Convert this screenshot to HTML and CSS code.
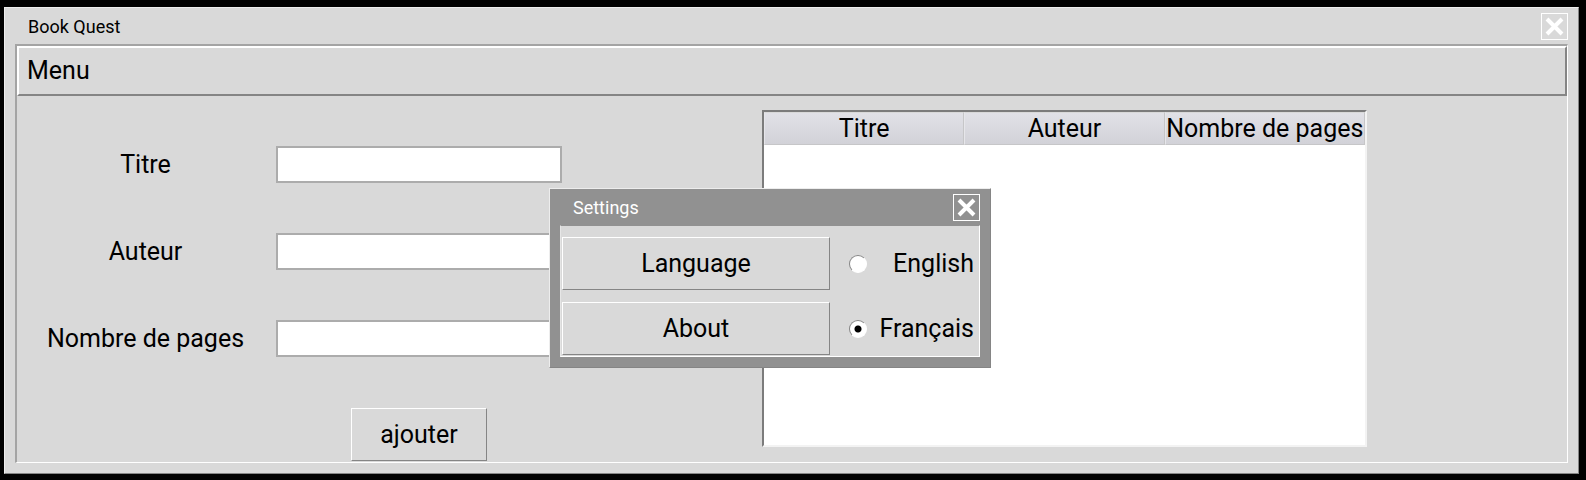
FILE: index.html
```html
<!DOCTYPE html>
<html lang="fr">
<head>
<meta charset="utf-8">
<title>Book Quest</title>
<link rel="stylesheet" href="styles.css">
</head>
<body class="desktop">
<main class="window">
  <header class="titlebar">
    <h1 class="title">Book Quest</h1>
    <button class="close" type="button" aria-label="Close">
      <svg class="cross" viewBox="0 0 25 25" aria-hidden="true"><path d="M5 5 L20 20 M20 5 L5 20"/></svg>
    </button>
  </header>
  <div class="frame">
    <nav class="menubar"><button class="menu-item" type="button">Menu</button></nav>
    <div class="content">
      <form class="form">
        <label class="label" for="titre">Titre</label>
        <input class="field" id="titre" type="text">
        <label class="label" for="auteur">Auteur</label>
        <input class="field" id="auteur" type="text">
        <label class="label" for="pages">Nombre de pages</label>
        <input class="field" id="pages" type="text">
        <button class="button add" type="button">ajouter</button>
      </form>
      <div class="list">
        <table class="table">
          <thead>
            <tr><th>Titre</th><th>Auteur</th><th>Nombre de pages</th></tr>
          </thead>
        </table>
      </div>
    </div>
  </div>
</main>
<section class="window settings" role="dialog" aria-labelledby="settings-title">
  <header class="titlebar">
    <h2 class="title" id="settings-title">Settings</h2>
    <button class="close" type="button" aria-label="Close">
      <svg class="cross" viewBox="0 0 25 25" aria-hidden="true"><path d="M5 5 L20 20 M20 5 L5 20"/></svg>
    </button>
  </header>
  <div class="panel">
    <button class="button" type="button">Language</button>
    <div class="option"><input class="radio" type="radio" name="lang" id="en"><label for="en">English</label></div>
    <button class="button" type="button">About</button>
    <div class="option"><input class="radio" type="radio" name="lang" id="fr" checked><label for="fr">Français</label></div>
  </div>
</section>
</body>
</html>
```

FILE: styles.css
```css
* {
  box-sizing: border-box;
}

.desktop {
  margin: 0;
  padding: 7px 7px 6px 4px;
  background: #000;
  color: #000;
  font: 25px/30px Roboto, sans-serif;
}

button,
input {
  font: inherit;
  color: inherit;
  border-radius: 0;
  margin: 0;
}

.window {
  padding: 0 10px 10px;
  background: #d9d9d9;
  border: 1px solid;
  border-color: #ededed #858585 #858585 #ededed;
}

.titlebar {
  display: flex;
  align-items: center;
  justify-content: space-between;
  height: 36px;
  padding-left: 13px;
}

.title {
  margin: 0;
  padding-top: 2px;
  font-size: 18px;
  line-height: 24px;
  font-weight: 400;
}

.close {
  width: 27px;
  height: 27px;
  padding: 0;
  border: 1px solid #fff;
  background: none;
}

.cross {
  display: block;
  fill: none;
  stroke: #fff;
  stroke-width: 4;
}

.frame {
  border: 1px solid;
  border-width: 2px 1px 1px 2px;
  border-color: #a4a4a4 #fff #fff #a4a4a4;
}

.menubar {
  padding: 8px;
  border: 2px solid;
  border-color: #fff #858585 #858585 #fff;
}

.menu-item {
  display: block;
  padding: 0;
  border: 0;
  background: none;
}

.content {
  display: grid;
  grid-template-columns: 545fr 200fr 605fr 200fr;
}

.form {
  display: grid;
  grid-template-columns: 259fr 286fr;
  grid-template-rows: repeat(3, 87px) auto;
  align-items: center;
  justify-items: center;
  padding: 25px 0 1px;
}

.label {
  padding-right: 2px;
}

.field {
  width: 100%;
  height: 37px;
  padding: 0 4px;
  border: 2px solid #acacac;
  background: #fff;
}

.button {
  height: 53px;
  padding: 0;
  border: 1px solid;
  border-color: #fff #858585 #858585 #fff;
  background: #d9d9d9;
}

.add {
  grid-column: 2;
  width: 136px;
  margin-top: 26px;
}

.list {
  grid-column: 3;
  margin: 14px 0 15px;
  border: 2px solid;
  border-color: #7c7c7c #f3f3f3 #f3f3f3 #7c7c7c;
  background: #fff;
}

.table {
  width: 100%;
  border-collapse: separate;
  border-spacing: 0;
  table-layout: fixed;
}

.table th {
  padding: 1px 0 0;
  font-weight: 400;
  white-space: nowrap;
  border: 1px solid;
  border-color: #d9d9d9 #c6c6c8 #c6c6c8 #e6e6ea;
  background: linear-gradient(#e1e1e7, #d2d2d8);
}

.settings {
  position: absolute;
  top: 188px;
  left: 549px;
  width: 442px;
  background: #919191;
}

.settings .title {
  color: #fff;
}

.panel {
  display: grid;
  grid-template-columns: 268px 1fr;
  row-gap: 12px;
  padding: 11px 5px 1px 1px;
  border: 1px solid;
  border-color: #919191 #fff #fff #e6e6e6;
  background: #d9d9d9;
}

.option {
  display: flex;
  align-items: center;
  justify-content: space-between;
  padding-left: 19px;
}

.radio {
  appearance: none;
  width: 18px;
  height: 18px;
  border: 1px solid;
  border-color: #858585 #fff #fff #858585;
  border-radius: 50%;
  background: #fff;
}

.radio:checked {
  background: radial-gradient(circle, #000 0 3px, #fff 4px);
}
```
